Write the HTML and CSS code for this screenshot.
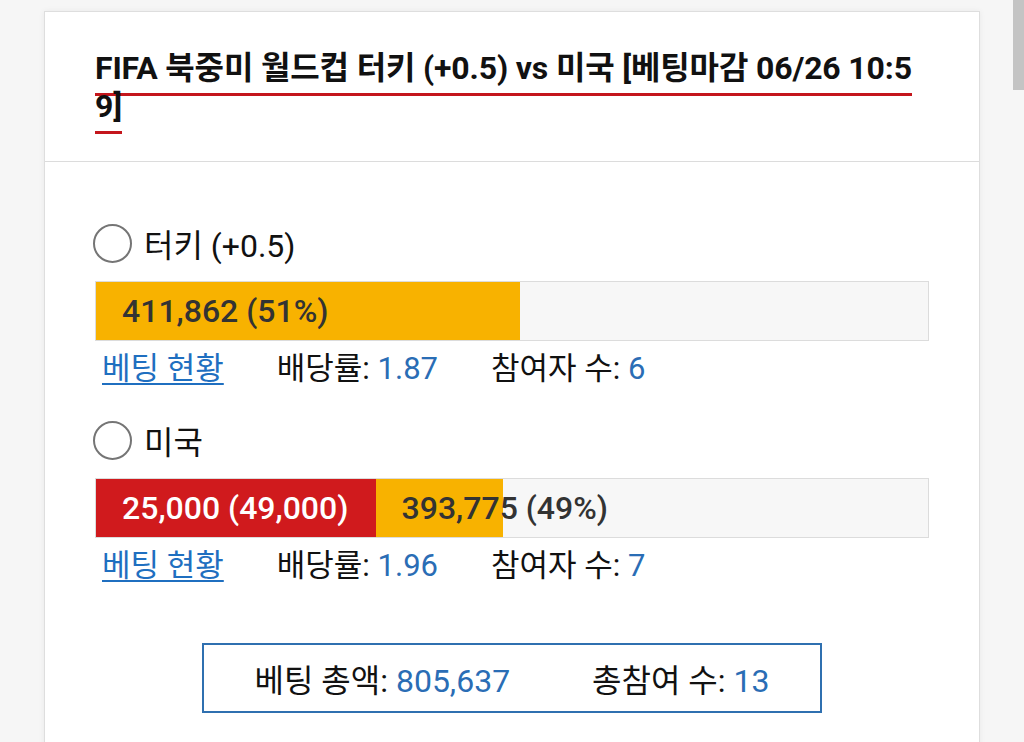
FILE: index.html
```html
<!DOCTYPE html>
<html lang="ko">
<head>
<meta charset="utf-8">
<title>FIFA 북중미 월드컵 터키 vs 미국</title>
<link rel="stylesheet" href="styles.css">
</head>
<body>
<div class="scroll-thumb"></div>
<div class="card">
  <div class="card-head">
    <h2 class="title"><span class="title-text">FIFA 북중미 월드컵 터키 (+0.5) vs 미국 [베팅마감 06/26 10:59]</span></h2>
  </div>
  <div class="card-body">
    <div class="option">
      <label class="choice"><span class="radio"></span><span class="choice-name">터키 (+0.5)</span></label>
      <div class="bar">
        <div class="seg seg-gold" style="width:51%">411,862 (51%)</div>
      </div>
      <div class="stats">
        <a class="stats-link" href="#">베팅 현황</a>
        <span class="stat">배당률: <em>1.87</em></span>
        <span class="stat">참여자 수: <em>6</em></span>
      </div>
    </div>
    <div class="option">
      <label class="choice"><span class="radio"></span><span class="choice-name">미국</span></label>
      <div class="bar">
        <div class="seg seg-red" style="width:33.6%">25,000 (49,000)</div>
        <div class="seg seg-gold" style="width:15.3%">393,775 (49%)</div>
      </div>
      <div class="stats">
        <a class="stats-link" href="#">베팅 현황</a>
        <span class="stat">배당률: <em>1.96</em></span>
        <span class="stat">참여자 수: <em>7</em></span>
      </div>
    </div>
    <div class="totals">
      <span class="stat">베팅 총액: <em>805,637</em></span>
      <span class="stat">총참여 수: <em>13</em></span>
    </div>
  </div>
</div>
</body>
</html>
```

FILE: styles.css
```css
html, body {
  margin: 0;
  padding: 0;
}

body {
  background: #f6f6f6;
  font-family: Roboto, "Noto Sans CJK KR", sans-serif;
  color: #111;
  overflow: hidden;
}

.scroll-thumb {
  position: fixed;
  top: 0;
  right: 0;
  width: 11px;
  height: 90px;
  background: #c4c4c4;
}

.card {
  margin: 11px 44px 0;
  background: #fff;
  border: 1px solid #dedede;
  box-shadow: 0 0 6px rgba(0, 0, 0, 0.06);
  min-height: 760px;
}

.card-head {
  padding: 37px 50px 36px 50px;
  border-bottom: 1px solid #dcdcdc;
}

.title {
  margin: 0;
  font-size: 32px;
  line-height: 38px;
  font-weight: 700;
  letter-spacing: -0.15px;
  word-break: break-all;
}

.title-text {
  padding-bottom: 6px;
  border-bottom: 3px solid #c4161c;
}

.card-body {
  padding: 61px 50px 0;
}

.option {
  margin-bottom: 35px;
}

.choice {
  display: flex;
  align-items: center;
  height: 40px;
  font-size: 32px;
  color: #111;
}

.radio {
  width: 35px;
  height: 35px;
  border: 2px solid #757575;
  border-radius: 50%;
  margin-left: -2px;
  margin-right: 12px;
}

.bar {
  display: flex;
  margin-top: 18px;
  height: 58px;
  border: 1px solid #dcdcdc;
  background: #f7f7f7;
}

.seg {
  box-sizing: border-box;
  padding-left: 26px;
  white-space: nowrap;
  overflow: visible;
  font-size: 32px;
  font-weight: 500;
  line-height: 58px;
  color: #333;
}

.seg-gold {
  background: #f8b200;
}

.seg-red {
  background: #d01a1d;
  color: #fff;
}

.stats {
  display: flex;
  gap: 53px;
  align-items: center;
  height: 40px;
  margin-top: 4px;
  padding-left: 7px;
  font-size: 31px;
}

.stats-link {
  color: #1f6fc0;
  text-decoration: underline;
  text-underline-offset: 4px;
  text-decoration-thickness: 2px;
}

.stat em {
  font-style: normal;
  color: #2a6db5;
}

.totals {
  display: flex;
  justify-content: center;
  gap: 82px;
  align-items: center;
  width: 620px;
  height: 70px;
  box-sizing: border-box;
  margin: 61px auto 0;
  border: 2px solid #2f70b0;
  font-size: 32px;
}
```
